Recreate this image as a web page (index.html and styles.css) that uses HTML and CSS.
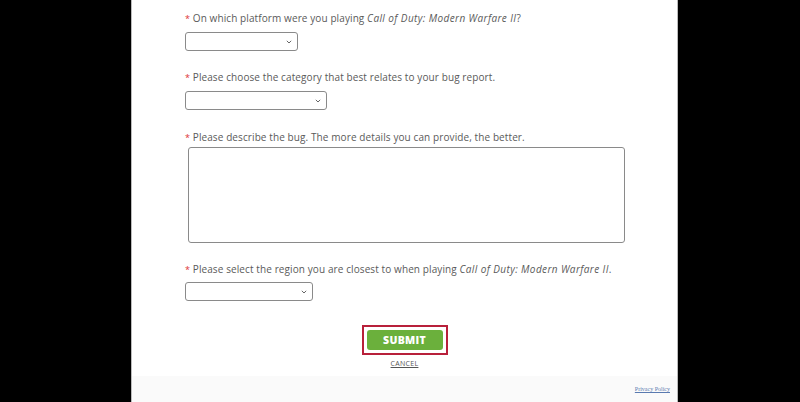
FILE: index.html
```html
<!DOCTYPE html>
<html>
<head>
<meta charset="utf-8">
<link rel="stylesheet" href="styles.css">
</head>
<body>
<div class="panel">
  <form class="form">
    <div class="field f1">
      <label class="label"><span class="req">*</span> On which platform were you playing <em>Call of Duty: Modern Warfare II</em>?</label>
      <div class="select s1"><svg class="chev" width="6" height="4" viewBox="0 0 6 4"><path d="M0.8 0.8 L3 3 L5.2 0.8" fill="none" stroke="#666" stroke-width="1"/></svg></div>
    </div>
    <div class="field f2">
      <label class="label"><span class="req">*</span> Please choose the category that best relates to your bug report.</label>
      <div class="select s2"><svg class="chev" width="6" height="4" viewBox="0 0 6 4"><path d="M0.8 0.8 L3 3 L5.2 0.8" fill="none" stroke="#666" stroke-width="1"/></svg></div>
    </div>
    <div class="field f3">
      <label class="label"><span class="req">*</span> Please describe the bug. The more details you can provide, the better.</label>
      <div class="textarea"></div>
    </div>
    <div class="field f4">
      <label class="label"><span class="req">*</span> Please select the region you are closest to when playing <em>Call of Duty: Modern Warfare II</em>.</label>
      <div class="select s4"><svg class="chev" width="6" height="4" viewBox="0 0 6 4"><path d="M0.8 0.8 L3 3 L5.2 0.8" fill="none" stroke="#666" stroke-width="1"/></svg></div>
    </div>
    <div class="actions">
      <div class="outline"><button type="button" class="submit">SUBMIT</button></div>
      <a class="cancel">CANCEL</a>
    </div>
  </form>
  <div class="footer"><a class="privacy">Privacy Policy</a></div>
</div>
</body>
</html>
```
FILE: styles.css
```css
html, body {
  margin: 0;
  padding: 0;
  background: #000;
  height: 402px;
  overflow: hidden;
}
.panel {
  margin-left: 131px;
  width: 547px;
  height: 402px;
  background: #fff;
  border-left: 1px solid #bbb;
  border-right: 1px solid #bbb;
  box-sizing: border-box;
  display: flex;
  flex-direction: column;
  font-family: "Open Sans", "Liberation Sans", sans-serif;
}
.form {
  flex: 1;
  display: flex;
  flex-direction: column;
  padding: 12px 0 0 53px;
}
.field {
  display: flex;
  flex-direction: column;
  align-items: flex-start;
}
.label {
  font-size: 10px;
  line-height: 13px;
  color: #5a5a5a;
  letter-spacing: 0.1px;
  margin-bottom: 7px;
}
.label em { font-style: italic; letter-spacing: 0.4px; }
.req { color: #d33; font-size: 9px; }
.select {
  height: 19px;
  border: 1px solid #8a8a8a;
  border-radius: 3px;
  box-sizing: border-box;
  display: flex;
  align-items: center;
  justify-content: flex-end;
  padding-right: 5px;
  background: #fff;
}
.s1 { width: 113px; }
.s2 { width: 142px; }
.s4 { width: 128px; }
.f2 { margin-top: 20px; }
.f3 { margin-top: 21px; }
.f4 { margin-top: 20px; }
.f3 .label { margin-bottom: 3px; }
.f4 .label { margin-bottom: 6px; }
.textarea {
  margin-left: 3px;
  width: 437px;
  height: 96px;
  border: 1px solid #8a8a8a;
  border-radius: 3px;
  box-sizing: border-box;
}
.actions {
  margin-top: 24px;
  margin-left: -53px;
  display: flex;
  flex-direction: column;
  align-items: center;
}
.outline {
  border: 2px solid #b8203a;
  padding: 3px;
  display: flex;
}
.submit {
  width: 76px;
  height: 20px;
  border: none;
  border-radius: 3px;
  background: #6bb03c;
  color: #fff;
  font-family: "Open Sans", "Liberation Sans", sans-serif;
  font-weight: 800;
  font-size: 10.5px;
  letter-spacing: 0.3px;
  padding: 0;
}
.cancel {
  margin-top: 4px;
  font-size: 7px;
  color: #555;
  text-decoration: underline;
  letter-spacing: 0.3px;
}
.footer {
  height: 26px;
  background: #fafafa;
  display: flex;
  justify-content: flex-end;
  align-items: center;
  padding-right: 7px;
}
.privacy {
  font-family: "Liberation Serif", serif;
  font-size: 6px;
  color: #5a7ab0;
  text-decoration: underline;
}
```
